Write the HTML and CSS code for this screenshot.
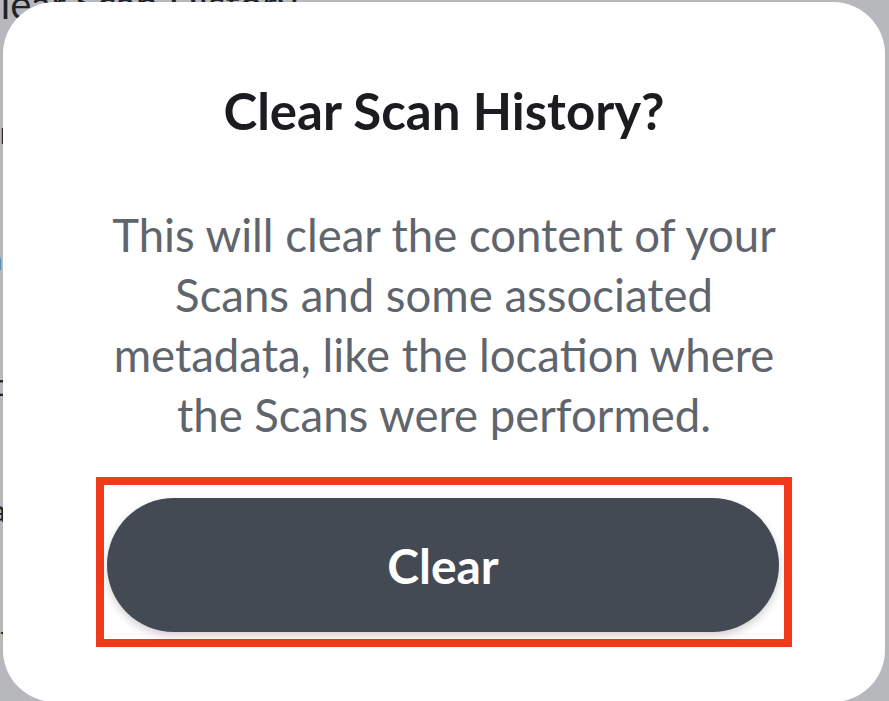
FILE: index.html
```html
<!DOCTYPE html>
<html lang="en">

<head>
    <meta charset="UTF-8">
    <meta name="viewport" content="width=device-width, initial-scale=1.0">
    <title>Clear Scan History</title>
    <link rel="stylesheet" href="styles.css">
</head>

<body>

    <div class="backdrop">
        <p class="bg-title">Clear Scan History</p>
        <p class="bg-row">Settings</p>
        <p class="bg-row">Scans</p>
        <p class="bg-row">History</p>
        <p class="bg-row">Privacy</p>
        <p class="bg-row">Location</p>
    </div>

    <div class="dialog">
        <h2 class="dialog-title">Clear Scan History?</h2>
        <p class="dialog-text">This will clear the content of your<br>Scans and some associated<br>metadata, like the location where<br>the Scans were performed.</p>
        <div class="highlight">
            <button class="btn-clear">Clear</button>
        </div>
    </div>

</body>

</html>
```

FILE: styles.css
```css
* {
    margin: 0;
    padding: 0;
}

body {
    width: 889px;
    height: 701px;
    overflow: hidden;
    position: relative;
    background-color: #b6b8bc;
    font-family: Lato, "Noto Sans", sans-serif;
}

.backdrop {
    color: #1f2226;
}

.bg-title {
    font-size: 40px;
    line-height: 40px;
    margin-top: -16px;
    margin-left: -26px;
}

.bg-row {
    font-size: 30px;
    margin-top: 90px;
    margin-left: -60px;
}

.dialog {
    position: absolute;
    left: 3px;
    top: 2px;
    width: 882px;
    height: 700px;
    box-sizing: border-box;
    background-color: #fff;
    border-radius: 52px;
    display: flex;
    flex-direction: column;
    align-items: center;
    padding-top: 79px;
}

.dialog-title {
    font-size: 51px;
    line-height: 60px;
    font-weight: 700;
    color: #1b1c1f;
}

.dialog-text {
    margin-top: 64px;
    font-size: 45.5px;
    line-height: 60px;
    color: #5f656d;
    text-align: center;
}

.highlight {
    margin-top: 32px;
    width: 696px;
    box-sizing: border-box;
    border: 8px solid #f2391b;
    padding: 13px 5px 7px 3px;
}

.btn-clear {
    display: block;
    width: 100%;
    height: 134px;
    border: none;
    border-radius: 67px;
    background-color: #434a53;
    color: #fff;
    font-family: Lato, "Noto Sans", sans-serif;
    font-size: 48px;
    font-weight: 700;
    box-shadow: 0 4px 8px rgba(0, 0, 0, 0.18);
}
```
